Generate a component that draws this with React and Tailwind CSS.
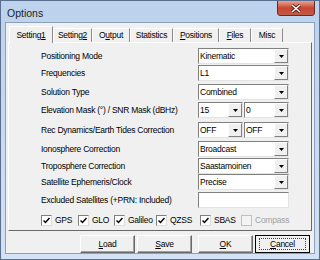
import React from 'react';

const Arrow = () => (
    <svg width="5" height="3" viewBox="0 0 5 3"><path d="M0 0h5L2.5 3z" fill="#000" /></svg>
);

const Combo = ({ value, w }) => (
    <div className={`flex h-[16px] ${w} bg-white border border-t-[#808080] border-l-[#808080] border-r-[#e3e3e3] border-b-[#e3e3e3]`}>
        <span className="flex-1 pl-[1px] leading-[14px] truncate">{value}</span>
        <div className="w-[14px] h-[14px] flex items-center justify-center bg-[#f0f0f0] border border-t-white border-l-white border-r-[#808080] border-b-[#808080]">
            <Arrow />
        </div>
    </div>
);

const Row = ({ label, mt, children }) => (
    <div className={`flex items-center h-[16px] ${mt}`}>
        <span className="w-[157px] shrink-0">{label}</span>
        {children}
    </div>
);

const Check = ({ label, w, disabled }) => (
    <div className={`flex items-center ${w}`}>
        <div className={`w-[11px] h-[11px] shrink-0 flex items-center justify-center border ${disabled ? 'border-[#c0c0c0] bg-[#f4f4f4]' : 'border-t-[#808080] border-l-[#808080] border-r-[#dcdcdc] border-b-[#dcdcdc] bg-white'}`}>
            {!disabled && (
                <svg width="7" height="7" viewBox="0 0 7 7"><path d="M0.5 3.5l2 2 4-4.5" stroke="#000" strokeWidth="1.5" fill="none" /></svg>
            )}
        </div>
        <span className={`ml-[3px] ${disabled ? 'text-[#a0a0a0]' : ''}`}>{label}</span>
    </div>
);

const Tab = ({ children, w, active }) => (
    <div className={`${w} flex items-center justify-center border-t border-l border-r border-t-white border-l-white border-r-[#8a8a8a] bg-[#f0f0f0] ${active ? 'h-[17px] -mb-[1px] relative z-10' : 'h-[14px]'}`}>
        {children}
    </div>
);

const Btn = ({ children, focus }) => (
    <div className={`w-[55px] h-[18px] flex items-center justify-center bg-[#f0f0f0] ${focus ? 'border border-black' : 'border border-t-white border-l-white border-r-[#696969] border-b-[#696969] shadow-[inset_-1px_-1px_0_#a0a0a0]'}`}>
        {focus ? (
            <div className="w-[47px] h-[12px] flex items-center justify-center border border-dotted border-[#404040]">{children}</div>
        ) : children}
    </div>
);

export default function App() {
    return (
        <div className="w-[320px] h-[260px] flex flex-col bg-gradient-to-b from-[#bcd2ed] via-[#c8daf0] to-[#d3e2f4] border border-[#5a6f8e] font-['Liberation_Sans',Arial,sans-serif] text-[8.5px] tracking-[-0.25px] text-black overflow-hidden">
            {/* title bar */}
            <div className="flex h-[21px] shrink-0">
                <span className="pl-[6px] pt-[5px] text-[10.5px] tracking-normal text-[#222]">Options</span>
                <div className="ml-auto mr-[4px] w-[38px] h-[16px] -mt-[1px] flex items-center justify-center rounded-b-[3px] border border-[#6d2a23] bg-gradient-to-b from-[#e8a293] via-[#c9452f] to-[#c25a48]">
                    <svg width="10" height="9" viewBox="0 0 10 9">
                        <path d="M1 1l8 7M9 1l-8 7" stroke="#4a1510" strokeWidth="3" />
                        <path d="M1 1l8 7M9 1l-8 7" stroke="#fff" strokeWidth="1.6" />
                    </svg>
                </div>
            </div>

            {/* client area */}
            <div className="flex-1 mx-[4px] mb-[5px] flex flex-col bg-[#f0f0f0] border border-[#8ca0bc] px-[2px] pt-[2px]">
                <div className="flex items-end h-[17px] pl-[1px] shrink-0">
                    <Tab w="w-[44px]" active>Setting<u>1</u></Tab>
                    <Tab w="w-[39px]">Setting<u>2</u></Tab>
                    <Tab w="w-[38px]">O<u>u</u>tput</Tab>
                    <Tab w="w-[43px]">Statistics</Tab>
                    <Tab w="w-[46px]"><u>P</u>ositions</Tab>
                    <Tab w="w-[32px]"><u>F</u>iles</Tab>
                    <Tab w="w-[32px]">Misc</Tab>
                </div>
                <div className="h-[189px] shrink-0 border border-t-white border-l-white border-r-[#696969] border-b-[#696969] pl-[32px] pt-[5px]">
                    <Row label="Positioning Mode" mt="mt-0"><Combo value="Kinematic" w="w-[91px]" /></Row>
                    <Row label="Frequencies" mt="mt-[1px]"><Combo value="L1" w="w-[91px]" /></Row>
                    <Row label="Solution Type" mt="mt-[3px]"><Combo value="Combined" w="w-[91px]" /></Row>
                    <Row label="Elevation Mask (°) / SNR Mask (dBHz)" mt="mt-[2px]">
                        <Combo value="15" w="w-[45px]" />
                        <div className="ml-[1px]"><Combo value="0" w="w-[45px]" /></div>
                    </Row>
                    <Row label="Rec Dynamics/Earth Tides Correction" mt="mt-[4px]">
                        <Combo value="OFF" w="w-[45px]" />
                        <div className="ml-[1px]"><Combo value="OFF" w="w-[45px]" /></div>
                    </Row>
                    <Row label="Ionosphere Correction" mt="mt-[3px]"><Combo value="Broadcast" w="w-[91px]" /></Row>
                    <Row label="Troposphere Correction" mt="mt-[1px]"><Combo value="Saastamoinen" w="w-[91px]" /></Row>
                    <Row label="Satellite Ephemeris/Clock" mt="mt-0"><Combo value="Precise" w="w-[91px]" /></Row>
                    <Row label="Excluded Satellites (+PRN: Included)" mt="mt-[2px]">
                        <div className="w-[91px] h-[16px] bg-white border border-t-[#808080] border-l-[#808080] border-r-[#e3e3e3] border-b-[#e3e3e3]" />
                    </Row>
                    <div className="flex items-center mt-[6px] h-[12px]">
                        <Check label="GPS" w="w-[37px]" />
                        <Check label="GLO" w="w-[36px]" />
                        <Check label="Galileo" w="w-[42px]" />
                        <Check label="QZSS" w="w-[44px]" />
                        <Check label="SBAS" w="w-[41px]" />
                        <Check label="Compass" w="w-[50px]" disabled />
                    </div>
                </div>
                <div className="flex items-center pl-[72px] mt-[4px] gap-[2px]">
                    <Btn><u>L</u>oad</Btn>
                    <Btn><u>S</u>ave</Btn>
                    <div className="ml-[4px]"><Btn><u>O</u>K</Btn></div>
                    <Btn focus><u>C</u>ancel</Btn>
                </div>
            </div>
        </div>
    );
}
